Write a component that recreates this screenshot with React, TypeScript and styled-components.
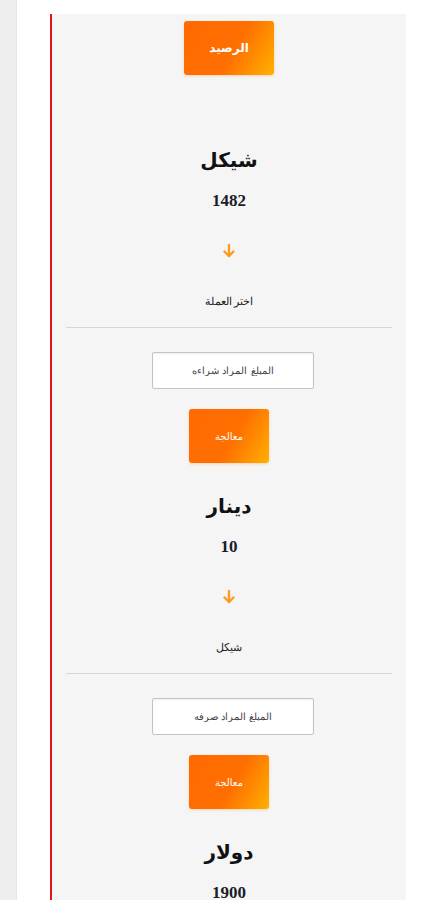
import React from "react";
import styled, { createGlobalStyle } from "styled-components";

const GlobalStyle = createGlobalStyle`
  html, body {
    margin: 0;
    padding: 0;
    background: #fff;
  }
  body {
    font-family: "DejaVu Sans", "Noto Sans", sans-serif;
  }
`;

const Page = styled.div`
  display: flex;
  min-height: 100vh;
`;

const Sidebar = styled.div`
  width: 16px;
  flex-shrink: 0;
  background: #eeeeee;
  border-right: 1px solid #e6e6e6;
`;

const Main = styled.div`
  flex: 1;
  padding: 14px 33px 0 33px;
  background: #fff;
`;

const Panel = styled.div`
  min-height: calc(100vh - 14px);
  background: #f5f5f5;
  border-left: 2px solid #e3161b;
  padding: 7px 14px 0;
  display: flex;
  flex-direction: column;
  align-items: center;
  direction: rtl;
  box-sizing: border-box;
`;

const OrangeButton = styled.button<{ $w: number; $size: number; $gap: number }>`
  width: ${(p) => p.$w}px;
  height: 54px;
  margin-bottom: ${(p) => p.$gap}px;
  border: 0;
  border-radius: 3px;
  background: linear-gradient(120deg, #ff6a00 0%, #ff6f00 55%, #ffb000 100%);
  box-shadow: 0 1px 3px rgba(255, 120, 0, 0.25);
  color: #fff;
  font-family: "DejaVu Sans", sans-serif;
  font-size: ${(p) => p.$size}px;
  font-weight: ${(p) => (p.$size > 11 ? 700 : 400)};
  padding: 0;
  cursor: pointer;
`;

const Title = styled.h3`
  margin: 0 0 16px;
  height: 30px;
  line-height: 30px;
  font-size: 20px;
  font-weight: 700;
  color: #111;
`;

const Amount = styled.div`
  height: 20px;
  line-height: 20px;
  margin-bottom: 33px;
  font-family: "Liberation Serif", serif;
  font-weight: 700;
  font-size: 17px;
  color: #1c1c2a;
`;

const ArrowWrap = styled.div`
  height: 14px;
  margin-bottom: 35px;
  display: flex;
`;

const Label = styled.div`
  height: 16px;
  line-height: 16px;
  margin-bottom: 18px;
  font-family: "Liberation Serif", "DejaVu Serif", serif;
  font-size: 11px;
  color: #222;
`;

const Divider = styled.hr`
  align-self: stretch;
  margin: 0 0 24px;
  border: 0;
  border-top: 1px solid #d6d6d6;
`;

const AmountInput = styled.input`
  width: 162px;
  height: 37px;
  margin: 0 0 20px 8px;
  box-sizing: border-box;
  border: 1px solid #c4c4c4;
  border-radius: 2px;
  background: #fff;
  box-shadow: inset 0 1px 2px rgba(0, 0, 0, 0.08);
  text-align: center;
  font-family: "DejaVu Serif", serif;
  font-size: 10px;
  &::placeholder {
    color: #444;
  }
`;

const DownArrow = () => (
  <svg width="12" height="14" viewBox="0 0 12 14">
    <path d="M6 1 V12" stroke="#ff9a1f" strokeWidth="2.4" strokeLinecap="round" fill="none" />
    <path d="M1.5 7.5 L6 12 L10.5 7.5" stroke="#ff9a1f" strokeWidth="2.4" strokeLinecap="round" strokeLinejoin="round" fill="none" />
  </svg>
);

type Currency = { name: string; amount: string; label?: string };

const CurrencyBlock = ({ name, amount, label }: Currency) => (
  <>
    <Title>{name}</Title>
    <Amount>{amount}</Amount>
    {label && (
      <>
        <ArrowWrap>
          <DownArrow />
        </ArrowWrap>
        <Label>{label}</Label>
        <Divider />
      </>
    )}
  </>
);

const App = () => {
  return (
    <>
      <GlobalStyle />
      <Page>
        <Sidebar />
        <Main>
          <Panel>
            <OrangeButton $w={90} $size={12} $gap={70}>
              الرصيد
            </OrangeButton>
            <CurrencyBlock name="شيكل" amount="1482" label="اختر العملة" />
            <AmountInput placeholder="المبلغ المراد شراءه" />
            <OrangeButton $w={80} $size={10} $gap={28}>
              معالجة
            </OrangeButton>
            <CurrencyBlock name="دينار" amount="10" label="شيكل" />
            <AmountInput placeholder="المبلغ المراد صرفه" />
            <OrangeButton $w={80} $size={10} $gap={28}>
              معالجة
            </OrangeButton>
            <CurrencyBlock name="دولار" amount="1900" />
          </Panel>
        </Main>
      </Page>
    </>
  );
};

export default App;
